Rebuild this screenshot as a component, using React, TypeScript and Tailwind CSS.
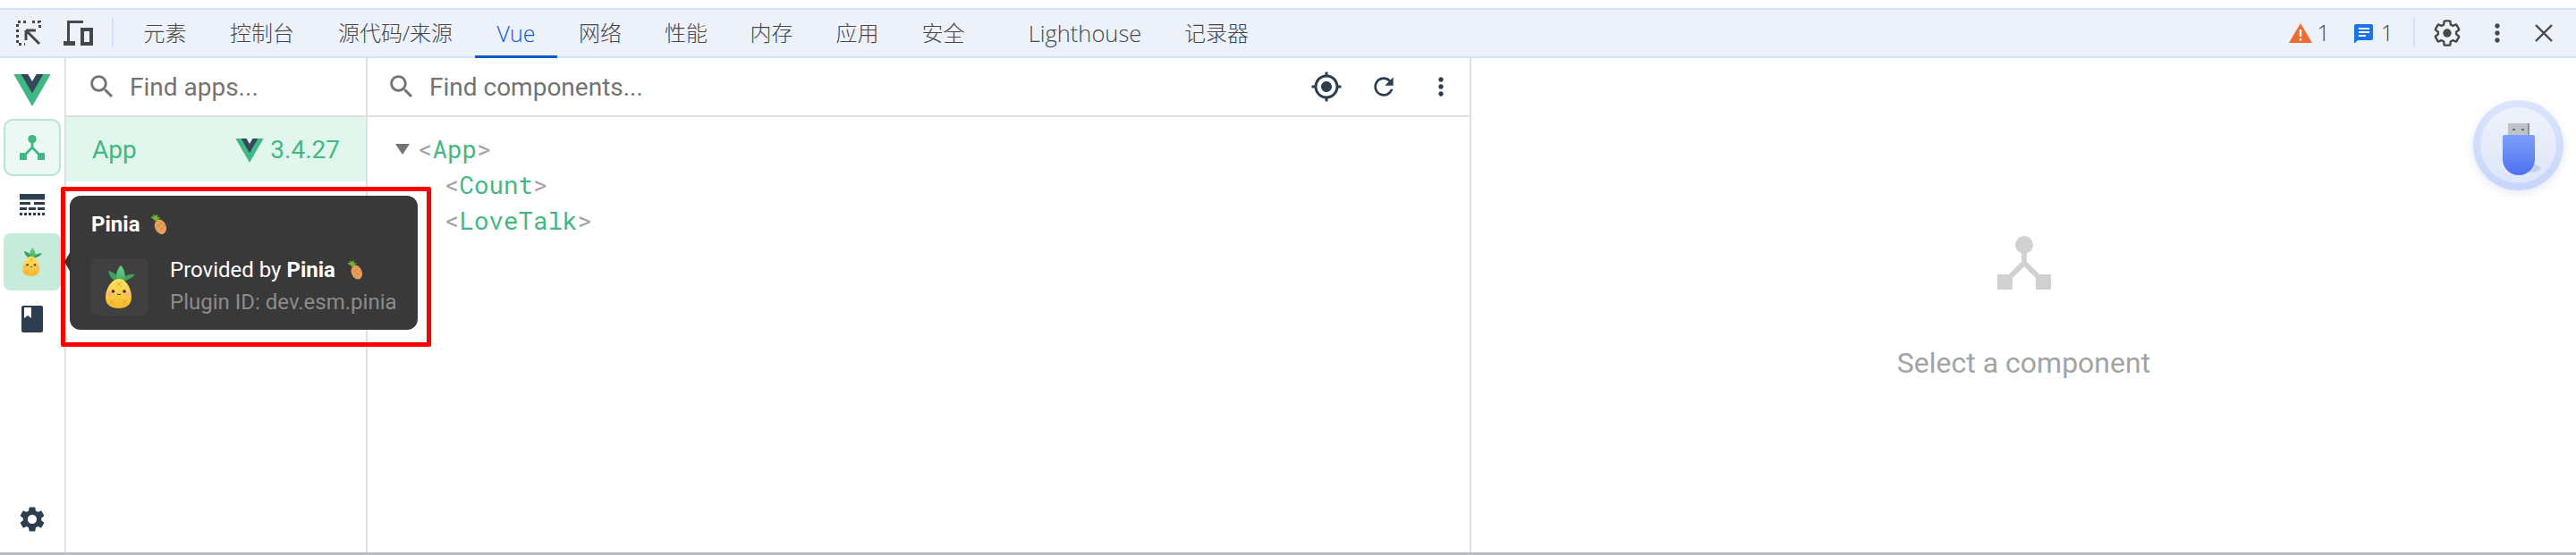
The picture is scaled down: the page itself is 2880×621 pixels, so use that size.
const P = ({ d, className }: { d: string; className?: string }) => (
  <svg viewBox="0 0 24 24" className={className} fill="currentColor"><path d={d} /></svg>
);

const SEARCH = "M15.5 14h-.79l-.28-.27C15.41 12.59 16 11.11 16 9.5 16 5.91 13.09 3 9.5 3S3 5.91 3 9.5 5.91 16 9.5 16c1.61 0 3.09-.59 4.23-1.57l.27.28v.79l5 4.99L20.49 19l-4.99-5zm-6 0C7.01 14 5 11.99 5 9.5S7.01 5 9.5 5 14 7.01 14 9.5 11.99 14 9.5 14z";
const GEAR_OUT = "M19.14 12.94c.04-.3.06-.61.06-.94 0-.32-.02-.64-.07-.94l2.03-1.58c.18-.14.23-.41.12-.61l-1.92-3.32c-.12-.22-.37-.29-.59-.22l-2.39.96c-.5-.38-1.03-.7-1.62-.94l-.36-2.54c-.04-.24-.24-.41-.48-.41h-3.84c-.24 0-.43.17-.47.41l-.36 2.54c-.59.24-1.13.57-1.62.94l-2.39-.96c-.22-.08-.47 0-.59.22L2.74 8.87c-.12.21-.08.47.12.61l2.03 1.58c-.05.3-.09.63-.09.94s.02.64.07.94l-2.03 1.58c-.18.14-.23.41-.12.61l1.92 3.32c.12.22.37.29.59.22l2.39-.96c.5.38 1.03.7 1.62.94l.36 2.54c.05.24.24.41.48.41h3.84c.24 0 .44-.17.47-.41l.36-2.54c.59-.24 1.13-.56 1.62-.94l2.39.96c.22.08.47 0 .59-.22l1.92-3.32c.12-.22.07-.47-.12-.61l-2.01-1.58z";
const GEAR_HOLE = "M12 15.6c-1.98 0-3.6-1.62-3.6-3.6s1.62-3.6 3.6-3.6 3.6 1.62 3.6 3.6-1.62 3.6-3.6 3.6z";
const TARGET = "M12 8c-2.21 0-4 1.79-4 4s1.79 4 4 4 4-1.79 4-4-1.79-4-4-4zm8.94 3c-.46-4.17-3.77-7.48-7.94-7.94V1h-2v2.06C6.83 3.52 3.52 6.83 3.06 11H1v2h2.06c.46 4.17 3.77 7.48 7.94 7.94V23h2v-2.06c4.17-.46 7.48-3.77 7.94-7.94H23v-2h-2.06zM12 19c-3.87 0-7-3.13-7-7s3.13-7 7-7 7 3.13 7 7-3.13 7-7 7z";
const REFRESH = "M17.65 6.35C16.2 4.9 14.21 4 12 4c-4.42 0-7.99 3.58-7.99 8s3.57 8 7.99 8c3.73 0 6.84-2.55 7.73-6h-2.08c-.82 2.33-3.04 4-5.65 4-3.31 0-6-2.69-6-6s2.69-6 6-6c1.66 0 3.14.69 4.22 1.78L13 11h7V4l-2.35 2.35z";
const DOTS = "M12 8c1.1 0 2-.9 2-2s-.9-2-2-2-2 .9-2 2 .9 2 2 2zm0 2c-1.1 0-2 .9-2 2s.9 2 2 2 2-.9 2-2-.9-2-2-2zm0 6c-1.1 0-2 .9-2 2s.9 2 2 2 2-.9 2-2-.9-2-2-2z";

const VueLogo = ({ className }: { className?: string }) => (
  <svg viewBox="0 0 261.76 226.69" className={className}>
    <path fill="#41b883" d="M161.096.001l-30.225 52.351L100.647.001H-.005l130.877 226.688L261.749.001z" />
    <path fill="#34495e" d="M161.096.001l-30.225 52.351L100.647.001H52.346l78.526 136.01L209.398.001z" />
  </svg>
);

const TreeIcon = ({ className }: { className?: string }) => (
  <svg viewBox="0 0 60 60" className={className} fill="currentColor">
    <circle cx="30" cy="10" r="10" />
    <path d="M30 15V30L12 48M30 30L48 48" fill="none" stroke="currentColor" strokeWidth="6" />
    <rect x="0" y="43" width="17" height="17" />
    <rect x="43" y="43" width="17" height="17" />
  </svg>
);

const Pineapple = ({ className, id }: { className?: string; id: string }) => (
  <svg viewBox="0 0 33 48" className={className}>
    <defs>
      <linearGradient id={`${id}b`} x1="0" y1="0" x2="0" y2="1">
        <stop offset="0" stopColor="#fde363" />
        <stop offset="1" stopColor="#f6b92c" />
      </linearGradient>
      <linearGradient id={`${id}l`} x1="0" y1="0" x2="0" y2="1">
        <stop offset="0" stopColor="#6fd08a" />
        <stop offset="1" stopColor="#3fae62" />
      </linearGradient>
    </defs>
    <path fill="#3f9f5c" d="M14 19C9 17 4 13 3 6c5 1 10 4 12 9z" />
    <path fill="#3f9f5c" d="M17 19c5-2 11-3 16-9-5-1-12 1-16 5z" />
    <path fill={`url(#${id}l)`} d="M17 0c-4 4-6 10-4 18h8c2-8 0-14-4-18z" />
    <path fill={`url(#${id}b)`} d="M15 15c8 0 14 11 14 21 0 8-6 12-14.500 12S0 44 0 36c0-10 7-21 15-21z" />
    <path fill="none" stroke="#e9a92a" strokeWidth="1" d="M12 18l6 6M18 18l-6 6M4 38l6 6M10 38l-6 6M19 38l6 6M25 38l-6 6" />
    <circle cx="8.500" cy="29" r="1.800" fill="#3b2a20" />
    <circle cx="21" cy="29" r="1.800" fill="#3b2a20" />
    <circle cx="5" cy="32" r="2.500" fill="#f4a6a6" opacity="0.8" />
    <circle cx="24.500" cy="32" r="2.500" fill="#f4a6a6" opacity="0.8" />
    <path d="M13 32q2 1.500 4 0" fill="none" stroke="#3b2a20" strokeWidth="1" />
  </svg>
);

const PineEmoji = ({ className }: { className?: string }) => (
  <svg viewBox="0 0 20 24" className={className}>
    <path fill="#6cb52d" d="M6 8L0 3l4 0L3 0l3 2 2-2 1 4 3-1-3 4z" />
    <ellipse cx="12" cy="15" rx="6.500" ry="9" transform="rotate(-22 12 15)" fill="#e8a05a" />
    <path fill="none" stroke="#d1883f" strokeWidth="0.8" d="M7 11l9 9M10 8l8 8M15 8l-9 9M18 12l-8 9" />
  </svg>
);

const tabs = [
  { t: "元素", c: "flex w-[97px] items-center justify-center" },
  { t: "控制台", c: "flex w-[120px] items-center justify-center" },
  { t: "源代码/来源", c: "flex w-[178px] items-center justify-center" },
  { t: "Vue", c: "-mb-[2px] flex w-[92px] items-center justify-center border-b-[3px] border-[#0b57d0] pt-[3px] text-[25px] text-[#0b57d0]" },
  { t: "网络", c: "flex w-[96px] items-center justify-center" },
  { t: "性能", c: "flex w-[96px] items-center justify-center" },
  { t: "内存", c: "flex w-[95px] items-center justify-center" },
  { t: "应用", c: "flex w-[97px] items-center justify-center" },
  { t: "安全", c: "flex w-[95px] items-center justify-center" },
  { t: "Lighthouse", c: "ml-[24px] flex w-[174px] items-center justify-center text-[25.500px]" },
  { t: "记录器", c: "flex w-[120px] items-center justify-center" },
];

function Toolbar() {
  return (
    <div className="flex h-[56px] items-center border-y-2 border-[#d3e3fd] bg-[#edf2fa] text-[#474747]">
      <svg viewBox="0 0 28 28" className="ml-[18px] h-[28px] w-[28px]" fill="none" stroke="#474747">
        <path strokeWidth="3" strokeDasharray="3 3" d="M11 1.5H1.5V26.500H10M18 1.500H26.500V10" />
        <path strokeWidth="3" d="M11 11h11M11 11v11M11 11L26 26" />
      </svg>
      <svg viewBox="0 0 33 28" className="ml-[25px] h-[28px] w-[33px]" fill="#474747">
        <path d="M4 0h18v3H7v20h6v5H0v-5h4z" />
        <path fillRule="evenodd" d="M19 8h14v20H19zM23 12v12h6V12z" />
      </svg>
      <div className="ml-[21px] h-[32px] w-[2px] bg-[#d3e3fd]" />
      <div className="ml-[9px] flex h-full items-stretch font-['Open_Sans','Noto_Sans_CJK_SC',sans-serif] text-[24px] font-light">
        {tabs.map((x) => (
          <div key={x.t} className={x.c}>{x.t}</div>
        ))}
      </div>
      <div className="ml-auto flex items-center font-['Open_Sans',sans-serif] text-[25px] font-light">
        <svg viewBox="0 0 26 22" className="h-[22px] w-[26px]">
          <path fill="#ee6c2f" d="M13 0l13 22H0z" />
          <path fill="#fff" d="M11.800 7h2.400v8h-2.400zM11.800 17h2.400v2.400h-2.400z" />
        </svg>
        <span className="ml-[5px]">1</span>
        <svg viewBox="0 0 21 21" className="ml-[27px] h-[21px] w-[21px]">
          <path fill="#1a73e8" d="M2 0h17a2 2 0 012 2v14a2 2 0 01-2 2H4l-4 4V2a2 2 0 012-2z" />
          <path fill="#fff" d="M5 4h12v2H5zM5 8h12v2H5zM5 12h8v2H5z" />
        </svg>
        <span className="ml-[9px]">1</span>
        <div className="ml-[22px] h-[32px] w-[2px] bg-[#d3e3fd]" />
        <svg viewBox="0 0 24 24" className="ml-[19px] h-[34px] w-[34px]">
          <path d={GEAR_OUT} fill="none" stroke="#474747" strokeWidth="1.700" />
          <circle cx="12" cy="12" r="3.300" fill="#474747" />
        </svg>
        <P d={DOTS} className="ml-[23px] h-[32px] w-[32px]" />
        <svg viewBox="0 0 20 20" className="ml-[26px] mr-[26px] h-[20px] w-[20px]" fill="none" stroke="#474747" strokeWidth="2.400">
          <path d="M1 1l18 18M19 1L1 19" />
        </svg>
      </div>
    </div>
  );
}

function Sidebar() {
  return (
    <div className="flex w-[74px] shrink-0 flex-col items-center border-r-2 border-[#e0e0e0] bg-white text-[#2c3e50]">
      <VueLogo className="mt-[18px] h-[36px] w-[42px]" />
      <div className="mt-[14px] flex h-[64px] w-[64px] items-center justify-center rounded-[10px] border-2 border-[#b6e6d2] bg-[#ecf8f3] text-[#41b883]">
        <TreeIcon className="h-[28px] w-[28px]" />
      </div>
      <svg viewBox="0 0 28 24" className="mt-[20px] h-[24px] w-[28px]" fill="#2c3e50">
        <path d="M0 0h28v6.500H0zM0 9h12v3H0zM16 9h12v3H16zM0 15h8v3H0zM10 15h8v3H10zM20 15h8v3H20zM0 21h3v3H0zM5 21h3v3H5zM10 21h3v3H10zM15 21h3v3H15zM20 21h3v3H20zM25 21h3v3H25z" />
      </svg>
      <div className="mt-[20px] flex h-[64px] w-[64px] items-center justify-center rounded-[8px] bg-[#c6ebdb]">
        <Pineapple id="s" className="h-[32px] w-[22px]" />
      </div>
      <svg viewBox="0 0 24 30" className="mt-[17px] h-[30px] w-[24px]">
        <rect width="24" height="30" rx="2" fill="#2c3e50" />
        <path fill="#fff" d="M3 2h8v12l-4-3-4 3z" />
      </svg>
      <div className="mt-auto mb-[20px]">
        <P d={GEAR_OUT + GEAR_HOLE} className="h-[34px] w-[34px]" />
      </div>
    </div>
  );
}

function SearchRow({ text, pad, children }: { text: string; pad: string; children?: React.ReactNode }) {
  return (
    <div className={`flex h-[66px] items-center border-b-2 border-[#e0e0e0] font-['Roboto',sans-serif] text-[28px] text-[#737373] ${pad}`}>
      <P d={SEARCH} className="h-[34px] w-[34px] shrink-0" />
      <span className="ml-[14px] pt-[2px]">{text}</span>
      {children}
    </div>
  );
}

function TagRow({ name, indent, open }: { name: string; indent: string; open?: boolean }) {
  return (
    <div className={`flex h-[40px] items-center font-['Roboto_Mono','Liberation_Mono',monospace] text-[27.500px] ${indent}`}>
      {open && <div className="mr-[9px] h-0 w-0 border-x-[8px] border-t-[12px] border-x-transparent border-t-[#737373]" />}
      <span className="text-[#a3a3a3]">&lt;</span>
      <span className="text-[#41b883]">{name}</span>
      <span className="text-[#a3a3a3]">&gt;</span>
    </div>
  );
}

function Tooltip() {
  return (
    <div className="absolute left-[68px] top-[144px] h-[179px] w-[414px] rounded-[2px] border-[5px] border-[#ff0000]">
      <div className="absolute left-[5px] top-[5px] h-[150px] w-[389px] rounded-[12px] bg-[#333333]/97 pl-[24px] pt-[17px] font-['Roboto',sans-serif] text-white">
        <div className="absolute -left-[6px] top-[62px] h-0 w-0 border-y-[12px] border-r-[7px] border-y-transparent border-r-[#333333]" />
        <div className="flex items-center text-[24px] font-bold leading-[30px]">
          Pinia
          <PineEmoji className="ml-[12px] h-[24px] w-[19px]" />
        </div>
        <div className="mt-[23px] flex">
          <div className="flex h-[64px] w-[64px] items-center justify-center rounded-[8px] bg-[#404040]">
            <Pineapple id="t" className="h-[48px] w-[33px]" />
          </div>
          <div className="-mt-[5px] ml-[24px]">
            <div className="flex h-[36px] items-center text-[24px]">
              Provided by<span className="ml-[6px] font-bold">Pinia</span>
              <PineEmoji className="ml-[13px] h-[24px] w-[18px]" />
            </div>
            <div className="text-[24px] leading-[36px] text-[#8c8c8c]">Plugin ID: dev.esm.pinia</div>
          </div>
        </div>
      </div>
    </div>
  );
}

function UsbBubble() {
  return (
    <div className="absolute right-[14px] top-[47px] flex h-[101px] w-[101px] items-center justify-center rounded-full bg-gradient-to-b from-[#dbe5fc] to-[#c6d6fb] shadow-[0_3px_10px_rgba(120,140,200,0.2)]">
      <div className="flex h-[85px] w-[85px] flex-col items-center justify-center rounded-full bg-gradient-to-b from-[#eff2fa] to-[#dde6fa]">
        <svg viewBox="0 0 44 58" className="mt-[8px] ml-[8px] h-[58px] w-[44px]">
          <defs>
            <linearGradient id="usb" x1="0" y1="0" x2="0" y2="1">
              <stop offset="0" stopColor="#7d9ffa" />
              <stop offset="1" stopColor="#4e70f0" />
            </linearGradient>
          </defs>
          <ellipse cx="30" cy="50" rx="12" ry="5" fill="#b9c6ea" opacity="0.7" />
          <rect x="6" y="0" width="24" height="13" fill="#c0c2c9" />
          <rect x="28" y="0" width="2" height="13" fill="#8f929b" />
          <rect x="11" y="6" width="3" height="2" fill="#6a6d75" />
          <rect x="21" y="6" width="3" height="2" fill="#6a6d75" />
          <path fill="url(#usb)" d="M0 15a2 2 0 012-2h32a2 2 0 012 2v25a18 18 0 01-36 0z" />
        </svg>
      </div>
    </div>
  );
}

export default function App() {
  return (
    <div className="flex h-[621px] w-[2880px] flex-col overflow-hidden bg-white pt-[9px]">
      <Toolbar />
      <div className="relative flex min-h-0 flex-1 border-b-[3px] border-[#b8bcc4]">
        <Sidebar />
        <div className="relative w-[337px] shrink-0 border-r-2 border-[#e0e0e0]">
          <SearchRow text="Find apps..." pad="pl-[23px]" />
          <div className="flex h-[72px] items-center bg-[#e1f7ee] pl-[29px] pr-[29px] pt-[2px] font-['Roboto',sans-serif] text-[28px] text-[#41b883]">
            <span>App</span>
            <VueLogo className="ml-auto h-[27px] w-[32px]" />
            <span className="ml-[7px]">3.4.27</span>
          </div>
          <div className="absolute -right-[2px] top-[253px] h-[47px] w-[22px] rounded-l-[6px] border border-r-0 border-[#e0e0e0]">
            <div className="absolute left-[8px] top-[20px] h-[6px] w-[6px] rounded-full bg-[#111]" />
          </div>
        </div>
        <div className="flex w-[1234px] shrink-0 flex-col border-r-2 border-[#e0e0e0]">
          <SearchRow text="Find components..." pad="pl-[21px]">
            <div className="ml-auto flex items-center pr-[16px] text-[#2c3e50]">
              <P d={TARGET} className="h-[36px] w-[36px]" />
              <P d={REFRESH} className="ml-[30px] h-[32px] w-[32px]" />
              <P d={DOTS} className="ml-[32px] h-[32px] w-[32px]" />
            </div>
          </SearchRow>
          <div className="pt-[16px] pl-[31px]">
            <TagRow name="App" indent="" open />
            <TagRow name="Count" indent="pl-[55px]" />
            <TagRow name="LoveTalk" indent="pl-[55px]" />
          </div>
        </div>
        <div className="relative flex flex-1 flex-col items-center pt-[199px] font-['Roboto',sans-serif]">
          <TreeIcon className="h-[60px] w-[60px] text-[#d1d1d1]" />
          <div className="mt-[64px] text-[32px] leading-[36px] text-[#a3a3a3]">Select a component</div>
          <UsbBubble />
        </div>
        <Tooltip />
      </div>
    </div>
  );
}
